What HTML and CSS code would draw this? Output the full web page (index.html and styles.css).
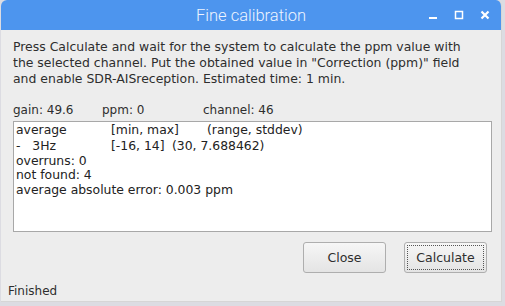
FILE: index.html
```html
<!DOCTYPE html>
<html>
<head>
<meta charset="utf-8">
<link rel="stylesheet" href="styles.css">
</head>
<body>
<div class="window">
  <div class="titlebar">
    <div class="title">Fine calibration</div>
    <div class="controls">
      <svg width="10" height="10" viewBox="0 0 10 10"><rect x="1" y="7" width="8" height="2" fill="#ffffff"/></svg>
      <svg width="10" height="10" viewBox="0 0 10 10"><rect x="1.5" y="1.5" width="7" height="7" fill="none" stroke="#ffffff" stroke-width="1.5"/></svg>
      <svg width="10" height="10" viewBox="0 0 10 10"><path d="M1.5 1.5 L8.5 8.5 M8.5 1.5 L1.5 8.5" stroke="#ffffff" stroke-width="2.2"/></svg>
    </div>
  </div>
  <div class="content">
    <p class="intro">Press Calculate and wait for the system to calculate the ppm value with the selected channel. Put the obtained value in "Correction (ppm)" field and enable SDR-AISreception. Estimated time: 1 min.</p>
    <div class="params">
      <span class="p-gain">gain: 49.6</span>
      <span class="p-ppm">ppm: 0</span>
      <span class="p-chan">channel: 46</span>
    </div>
    <div class="output">
      <div class="row"><span class="c1">average</span><span class="c2">[min, max]</span><span class="c3">(range, stddev)</span></div>
      <div class="row"><span class="c1">-&nbsp;&nbsp;&nbsp;3Hz</span><span class="c2b">[-16, 14]</span><span>(30, 7.688462)</span></div>
      <div class="row">overruns: 0</div>
      <div class="row">not found: 4</div>
      <div class="row">average absolute error: 0.003 ppm</div>
    </div>
    <div class="buttons">
      <button class="btn">Close</button>
      <button class="btn focus">Calculate</button>
    </div>
    <div class="status">Finished</div>
  </div>
</div>
</body>
</html>
```

FILE: styles.css
```css
html, body {
  margin: 0;
  padding: 0;
  background: #dcdce2;
  width: 505px;
  height: 306px;
  overflow: hidden;
}
.window {
  margin-left: 1px;
  width: 501px;
  height: 302px;
  background: #ededed;
  border-radius: 6px 6px 0 0;
  border-right: 1px solid #d6d6d6;
  border-bottom: 1px solid #d6d6d6;
  box-sizing: border-box;
  display: flex;
  flex-direction: column;
  overflow: hidden;
}
.titlebar {
  height: 30px;
  background: #4d95ee;
  position: relative;
  display: flex;
  align-items: center;
  justify-content: center;
  flex: none;
}
.title {
  font-family: Roboto, "Liberation Sans", sans-serif;
  font-weight: 300;
  font-size: 16.5px;
  color: #eef4ff;
}
.controls {
  position: absolute;
  right: 11px;
  top: 10px;
  display: flex;
  gap: 16px;
}
.content {
  flex: 1;
  display: flex;
  flex-direction: column;
  padding: 0 0 0 12px;
  font-family: "DejaVu Sans", sans-serif;
  font-size: 12px;
  color: #2e2e2e;
}
.intro {
  margin: 9px 0 0 0;
  width: 462px;
  line-height: 16px;
  font-size: 12.45px;
}
.params {
  margin-top: 15px;
  display: flex;
  line-height: 16px;
}
.p-gain { width: 89px; }
.p-ppm { width: 101px; }
.output {
  margin-top: 3px;
  width: 479px;
  height: 111px;
  box-sizing: border-box;
  background: #ffffff;
  border: 1px solid #a8a8a8;
  padding: 1px 0 0 2px;
  font-size: 12.4px;
  line-height: 14.8px;
  color: #222;
}
.row { display: flex; white-space: pre; }
.row:first-child { margin-bottom: 1px; }
.c1 { width: 95px; }
.c2 { width: 96px; }
.c2b { width: 61px; }
.buttons {
  margin-top: 10px;
  display: flex;
  justify-content: flex-end;
  gap: 18px;
  padding-right: 14px;
}
.btn {
  width: 83px;
  height: 31px;
  font-family: "DejaVu Sans", sans-serif;
  font-size: 12.5px;
  color: #2e2e2e;
  background: linear-gradient(#f6f6f6, #e4e4e4);
  border: 1px solid #aeaeae;
  border-radius: 3px;
  padding: 0;
}
.btn.focus {
  outline: 1px dotted #555;
  outline-offset: -4px;
}
.status {
  margin-top: auto;
  margin-left: -5px;
  margin-bottom: 2px;
  line-height: 16px;
}
```
